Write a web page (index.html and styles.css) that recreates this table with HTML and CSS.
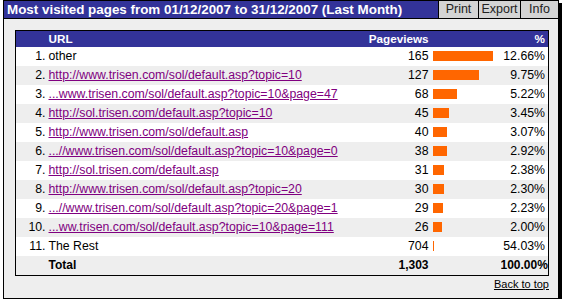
FILE: index.html
```html
<!DOCTYPE html>
<html>
<head>
<meta charset="utf-8">
<link rel="stylesheet" href="styles.css">
</head>
<body>
<div class="panel">
  <div class="titlebar">
    <div class="title">Most visited pages from 01/12/2007 to 31/12/2007 (Last Month)</div>
    <div class="btn btn-print">Print</div>
    <div class="btn btn-export">Export</div>
    <div class="btn btn-info">Info</div>
  </div>
  <div class="content">
    <table class="report">
      <colgroup>
        <col class="c-num"><col class="c-url"><col class="c-pv"><col class="c-bar"><col class="c-pct">
      </colgroup>
      <thead>
        <tr><th></th><th class="l">URL</th><th class="r">Pageviews</th><th></th><th class="r pct">%</th></tr>
      </thead>
      <tbody>
        <tr><td class="num">1.</td><td class="url">other</td><td class="pv">165</td><td class="bar"><span class="b" style="width:60px"></span></td><td class="pct">12.66%</td></tr>
        <tr class="alt"><td class="num">2.</td><td class="url"><a href="#">http://www.trisen.com/sol/default.asp?topic=10</a></td><td class="pv">127</td><td class="bar"><span class="b" style="width:46px"></span></td><td class="pct">9.75%</td></tr>
        <tr><td class="num">3.</td><td class="url"><a href="#">...www.trisen.com/sol/default.asp?topic=10&amp;page=47</a></td><td class="pv">68</td><td class="bar"><span class="b" style="width:24px"></span></td><td class="pct">5.22%</td></tr>
        <tr class="alt"><td class="num">4.</td><td class="url"><a href="#">http://sol.trisen.com/default.asp?topic=10</a></td><td class="pv">45</td><td class="bar"><span class="b" style="width:16px"></span></td><td class="pct">3.45%</td></tr>
        <tr><td class="num">5.</td><td class="url"><a href="#">http://www.trisen.com/sol/default.asp</a></td><td class="pv">40</td><td class="bar"><span class="b" style="width:14px"></span></td><td class="pct">3.07%</td></tr>
        <tr class="alt"><td class="num">6.</td><td class="url"><a href="#">...//www.trisen.com/sol/default.asp?topic=10&amp;page=0</a></td><td class="pv">38</td><td class="bar"><span class="b" style="width:14px"></span></td><td class="pct">2.92%</td></tr>
        <tr><td class="num">7.</td><td class="url"><a href="#">http://sol.trisen.com/default.asp</a></td><td class="pv">31</td><td class="bar"><span class="b" style="width:11px"></span></td><td class="pct">2.38%</td></tr>
        <tr class="alt"><td class="num">8.</td><td class="url"><a href="#">http://www.trisen.com/sol/default.asp?topic=20</a></td><td class="pv">30</td><td class="bar"><span class="b" style="width:11px"></span></td><td class="pct">2.30%</td></tr>
        <tr><td class="num">9.</td><td class="url"><a href="#">...//www.trisen.com/sol/default.asp?topic=20&amp;page=1</a></td><td class="pv">29</td><td class="bar"><span class="b" style="width:10px"></span></td><td class="pct">2.23%</td></tr>
        <tr class="alt"><td class="num">10.</td><td class="url"><a href="#">...ww.trisen.com/sol/default.asp?topic=10&amp;page=111</a></td><td class="pv">26</td><td class="bar"><span class="b" style="width:9px"></span></td><td class="pct">2.00%</td></tr>
        <tr><td class="num">11.</td><td class="url">The Rest</td><td class="pv">704</td><td class="bar"><span class="b" style="width:1px"></span></td><td class="pct">54.03%</td></tr>
        <tr class="alt total"><td class="num"></td><td class="url">Total</td><td class="pv">1,303</td><td class="bar"></td><td class="pct">100.00%</td></tr>
      </tbody>
    </table>
    <div class="footer"><a class="top" href="#">Back to top</a></div>
  </div>
</div>
</body>
</html>
```

FILE: styles.css
```css
html, body {
  margin: 0;
  padding: 0;
  background: #ffffff;
}
body {
  font-family: "Liberation Sans", Arial, sans-serif;
  font-size: 12.3px;
  color: #000;
}
.panel {
  margin-left: 3px;
  width: 554px;
  height: 297px;
  border: 1px solid #000;
  background: #eeeeee;
  box-shadow: 3px 3px 0 #000;
}
.titlebar {
  display: flex;
  height: 17px;
  border-bottom: 1px solid #000;
}
.title {
  flex: 1;
  background: #333399;
  color: #fff;
  font-weight: bold;
  font-size: 13.4px;
  line-height: 17px;
  padding-left: 3px;
  white-space: nowrap;
}
.btn {
  background: #d4d4d4;
  color: #222;
  border-left: 1px solid #000;
  line-height: 17px;
  text-align: center;
  font-size: 12.5px;
}
.btn-print { width: 39px; }
.btn-export { width: 41px; }
.btn-info { width: 37px; }
.content {
  padding: 11px 9px 0 11px;
}
.report {
  width: 534px;
  border-collapse: collapse;
  border: 1px solid #000;
  background: #fff;
  table-layout: fixed;
}
.c-num { width: 30px; }
.c-pv { width: 80px; }
.c-bar { width: 72px; }
.c-pct { width: 48px; }
.report th {
  background: #333399;
  color: #fff;
  font-weight: bold;
  font-size: 11.7px;
  height: 16px;
  padding: 0;
  line-height: 16px;
}
.report th.l { text-align: left; padding-left: 3px; }
.report th.r { text-align: right; }
.report td {
  height: 19px;
  padding: 0;
  line-height: 19px;
  white-space: nowrap;
  overflow: hidden;
}
.report tr.alt td { background: #eeeeee; }
td.num { text-align: right; }
td.url { padding-left: 3px; }
td.pv { text-align: right; }
td.bar { padding-left: 4px; }
.pct { text-align: right; padding-right: 3px !important; }
.b {
  display: inline-block;
  height: 10px;
  background: #ff6600;
  vertical-align: -1px;
}
.url a {
  color: #800080;
  text-decoration: underline;
}
.total td { font-weight: bold; font-size: 12px; }
.footer {
  text-align: right;
  padding-top: 1px;
  width: 534px;
}
.top {
  color: #000;
  text-decoration: underline;
  font-size: 11px;
}
```
